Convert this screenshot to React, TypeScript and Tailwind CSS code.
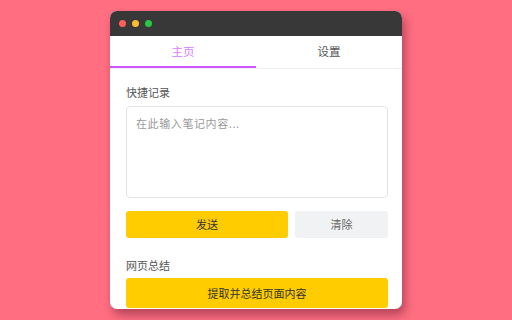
import { useState } from "react"

const font = { fontFamily: '"Noto Sans CJK SC", "Noto Sans", sans-serif' }

function Dot({ color }: { color: string }) {
  return <span className={`block h-[7px] w-[7px] rounded-full ${color}`} />
}

export default function App() {
  const [tab, setTab] = useState<"home" | "settings">("home")
  const [note, setNote] = useState("")

  return (
    <div className="h-[320px] w-[512px] overflow-hidden bg-[#ff6e81] pl-[110px] pt-[11px]" style={font}>
      <div className="flex h-[298px] w-[292px] flex-col overflow-hidden rounded-[7px] bg-white shadow-[3px_6px_10px_rgba(90,20,40,0.45)]">
        <div className="flex h-[25px] shrink-0 items-center gap-[6px] bg-[#383838] pl-[9px]">
          <Dot color="bg-[#ff5f57]" />
          <Dot color="bg-[#febc2e]" />
          <Dot color="bg-[#28c840]" />
        </div>

        <div className="flex h-[33px] shrink-0 border-b border-[#f0f0f0]">
          <button
            onClick={() => setTab("home")}
            className={`flex-1 border-b-2 pt-[1px] text-[11.5px] ${
              tab === "home" ? "border-[#cf55ff] text-[#d77cff]" : "border-transparent text-[#555]"
            }`}
          >
            主页
          </button>
          <button
            onClick={() => setTab("settings")}
            className={`flex-1 border-b-2 pt-[1px] text-[11.5px] ${
              tab === "settings" ? "border-[#cf55ff] text-[#d77cff]" : "border-transparent text-[#555]"
            }`}
          >
            设置
          </button>
        </div>

        <div className="flex flex-col pl-4 pr-[14px] pt-[14px]">
          <p className="text-[11px] leading-[18px] text-[#555]">快捷记录</p>
          <textarea
            value={note}
            onChange={(e) => setNote(e.target.value)}
            placeholder="在此输入笔记内容..."
            className="mt-[5px] h-[92px] resize-none rounded-[4px] border border-[#e4e4e4] px-[9px] py-[8px] text-[11px] tracking-[0.6px] text-[#333] outline-none placeholder:text-[#9a9a9a]"
          />

          <div className="mt-[13px] flex gap-[7px]">
            <button className="h-[27px] flex-[162] rounded-[3px] bg-[#ffcc00] text-[11px] text-[#333]">发送</button>
            <button
              onClick={() => setNote("")}
              className="h-[27px] flex-[93] rounded-[3px] bg-[#f1f2f4] text-[11px] text-[#666]"
            >
              清除
            </button>
          </div>

          <p className="mt-[18px] text-[11px] leading-[18px] text-[#555]">网页总结</p>
          <button className="mt-[4px] h-[30px] rounded-[3px] bg-[#ffcc00] text-[11px] text-[#333]">
            提取并总结页面内容
          </button>
        </div>
      </div>
    </div>
  )
}
